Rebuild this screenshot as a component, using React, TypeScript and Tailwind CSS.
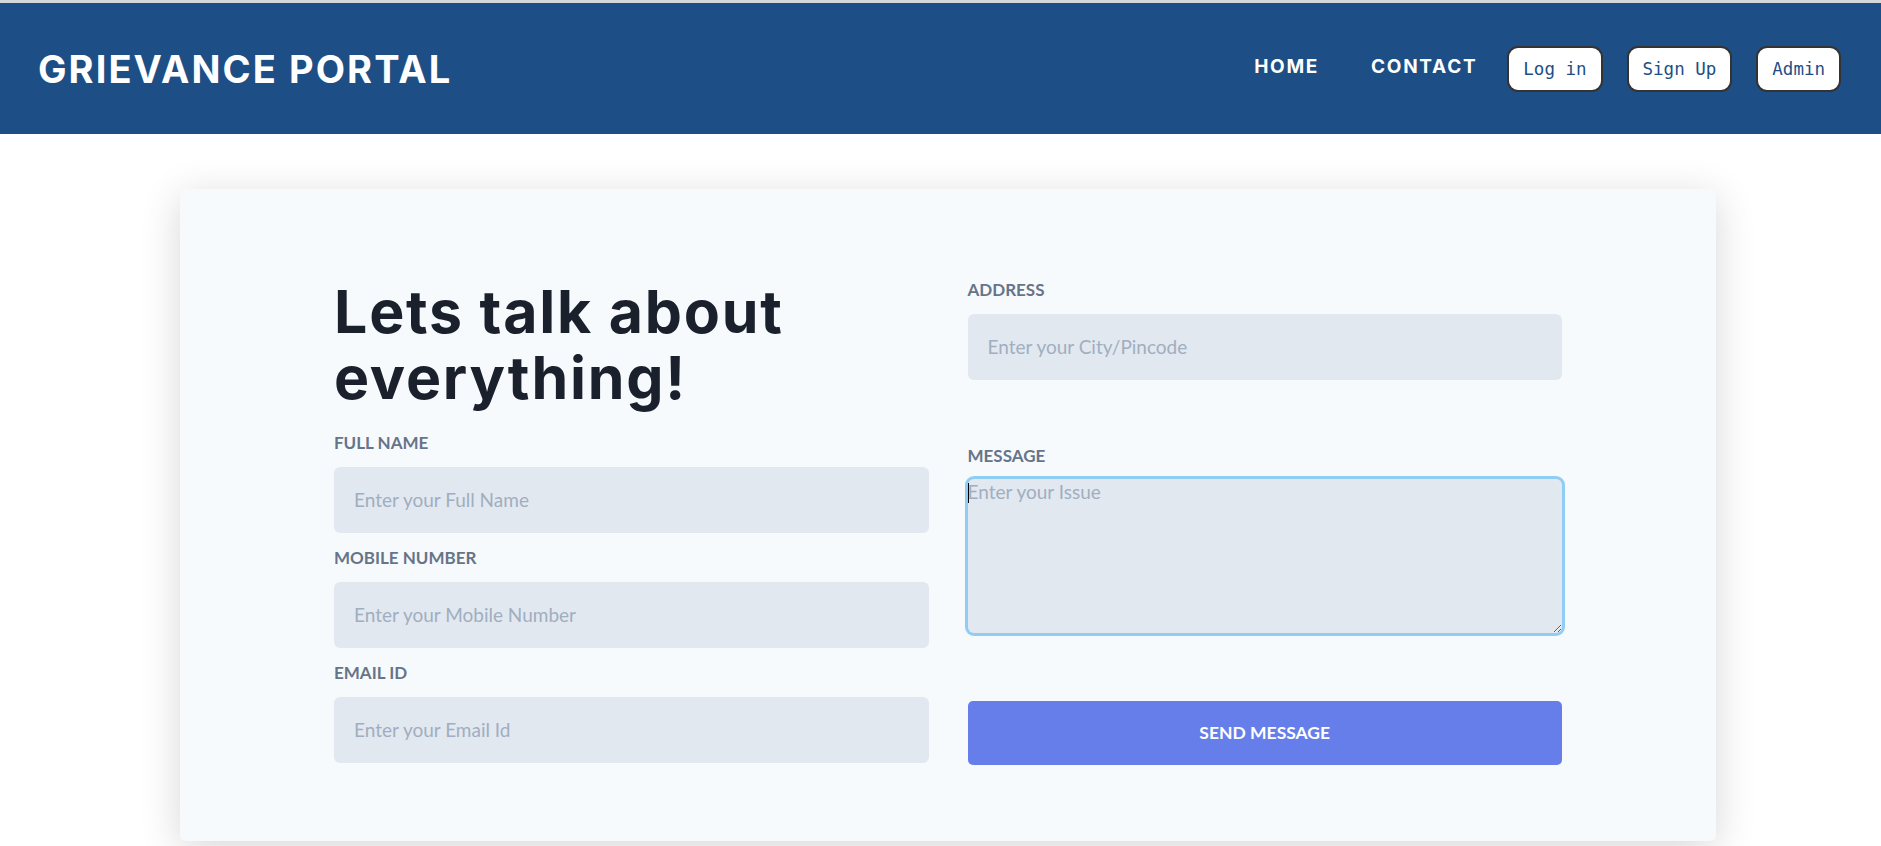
import React from 'react'

const head = { fontFamily: 'Inter, "Open Sans", sans-serif' }
const body = { fontFamily: 'Lato, "Open Sans", sans-serif' }
const mono = { fontFamily: '"DejaVu Sans Mono", "Liberation Mono", monospace' }

function Field({ label, placeholder, className = '' }: { label: string; placeholder: string; className?: string }) {
  return (
    <div className={className}>
      <label className="block uppercase text-[17px] leading-[25px] font-bold text-[#667489] mb-3">{label}</label>
      <input
        type="text"
        placeholder={placeholder}
        className="block w-full bg-[#e2e8f0] rounded-[6px] px-5 py-5 text-[19px] leading-[26px] text-[#1a202c] placeholder:text-[#a0aec0] outline-none"
        style={body}
      />
    </div>
  )
}

export default function App() {
  const buttons = ['Log in', 'Sign Up', 'Admin']

  return (
    <div className="min-h-screen bg-white pb-10" style={body}>
      <div className="h-[3px] bg-[#d6d9dc]" />
      <header className="h-[131px] bg-[#1d4f86] flex items-center justify-between pl-[38px] pr-[40px]">
        <h1 className="text-white font-bold text-[38px] tracking-[0.055em] leading-none" style={head}>
          GRIEVANCE PORTAL
        </h1>
        <nav className="flex items-center">
          <a className="text-white font-bold text-[19px] tracking-[0.09em] mr-[52px] -mt-[3px]" style={head}>HOME</a>
          <a className="text-white font-bold text-[19px] tracking-[0.09em] mr-[30px] -mt-[3px]" style={head}>CONTACT</a>
          <div className="flex gap-6">
            {buttons.map((b) => (
              <button
                key={b}
                className="bg-white border-2 border-[#333] rounded-[11px] px-[14px] py-[10px] text-[17.5px] leading-[22px] text-[#1d4f86]"
                style={mono}
              >
                {b}
              </button>
            ))}
          </div>
        </nav>
      </header>

      <main className="mt-[55px] ml-[180px] w-[1536px] bg-[#f7fafc] rounded-md shadow-[0_8px_40px_rgba(0,0,0,0.16)] pt-[88px] pb-[76px] px-[154px]">
        <div className="grid grid-cols-2 gap-x-[39px]">
          <div>
            <h2 className="mt-[2px] text-[59px] leading-[66px] font-bold text-[#1a202c] tracking-[0.03em]" style={head}>
              Lets talk about
              <br />
              everything!
            </h2>
            <Field className="mt-[19px]" label="Full Name" placeholder="Enter your Full Name" />
            <Field className="mt-3" label="Mobile Number" placeholder="Enter your Mobile Number" />
            <Field className="mt-3" label="Email Id" placeholder="Enter your Email Id" />
          </div>

          <div>
            <Field label="Address" placeholder="Enter your City/Pincode" />
            <label className="block mt-[63px] uppercase text-[17px] leading-[25px] font-bold text-[#667489] mb-[11px]">Message</label>
            <div className="relative">
              <textarea
                placeholder="Enter your Issue"
                className="block w-full h-[154px] bg-[#e2e8f0] rounded-[6px] ring-[3px] ring-[#90cdf4] text-[19px] leading-[26px] placeholder:text-[#a0aec0] outline-none"
                style={body}
              />
              <span className="absolute left-0 top-[4px] w-px h-[20px] bg-black" />
            </div>
            <button className="mt-[68px] w-full h-[64px] bg-[#667eea] rounded-[5px] text-white font-bold uppercase text-[17.5px]">
              Send Message
            </button>
          </div>
        </div>
      </main>
    </div>
  )
}
